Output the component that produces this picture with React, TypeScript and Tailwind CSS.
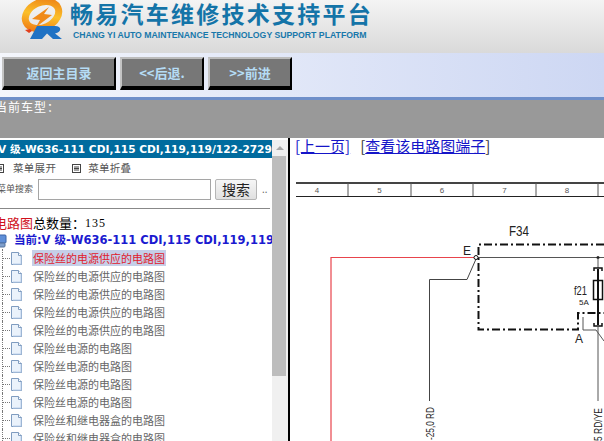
const cjk = "font-['Noto_Sans_CJK_SC','Noto_Sans',sans-serif]"

const treeItems = [
  "保险丝的电源供应的电路图",
  "保险丝的电源供应的电路图",
  "保险丝的电源供应的电路图",
  "保险丝的电源供应的电路图",
  "保险丝的电源供应的电路图",
  "保险丝电源的电路图",
  "保险丝电源的电路图",
  "保险丝电源的电路图",
  "保险丝电源的电路图",
  "保险丝和继电器盒的电路图",
  "保险丝和继电器盒的电路图",
]

function Logo() {
  return (
    <svg width="46" height="42" viewBox="0 0 46 42" className="shrink-0">
      <defs>
        <linearGradient id="swirl" x1="0" y1="1" x2="1" y2="0">
          <stop offset="0" stopColor="#ee6f10" />
          <stop offset="0.5" stopColor="#fbc02a" />
          <stop offset="1" stopColor="#ec7d14" />
        </linearGradient>
      </defs>
      <ellipse cx="23" cy="15" rx="17.5" ry="12.5" transform="rotate(-25 23 15)" fill="none" stroke="url(#swirl)" strokeWidth="7" />
      <path d="M30 7L13 19L21 20L17 27L33 15L25 14Z" fill="#f08a18" />
      <path d="M6 30L11 29L13 31L10 33Z" fill="#e2401c" />
      <path d="M11 39L18 26H36C43 26 43 32 36 33.5L43 39H34L28 33.5L23 39Z" fill="#1f72c4" />
    </svg>
  )
}

function NavButton({ label, width }: { label: string; width: string }) {
  return (
    <button
      className={`${width} h-[33px] bg-[#777777] border-t-[2px] border-l-[2px] border-r-[2px] border-b-[4px] border-t-[#bcbcbc] border-l-[#c4c4c4] border-r-black border-b-black text-[#b5dcf5] text-[13px] font-bold ${cjk}`}
    >
      {label}
    </button>
  )
}

function DocIcon() {
  return (
    <svg width="13" height="15" viewBox="0 0 13 15" className="shrink-0">
      <path d="M1.5 1.5H8.5L11.5 4.5V13.5H1.5Z" fill="#eaf2fb" stroke="#7f9cc0" />
      <path d="M8.5 1.5V4.5H11.5" fill="#ffffff" stroke="#7f9cc0" />
      <path d="M3 13H11V5" fill="none" stroke="#bcd0ea" />
    </svg>
  )
}

function MenuIcon() {
  return (
    <svg width="9" height="9" viewBox="0 0 9 9" className="shrink-0">
      <rect x="0.5" y="0.5" width="8" height="8" fill="#fff" stroke="#444" />
      <path d="M2 3H7M2 4.5H7M2 6H7" stroke="#444" />
    </svg>
  )
}

function TreeRow({ label, active }: { label: string; active?: boolean }) {
  return (
    <div className="flex items-center h-[18px] shrink-0">
      <div className="w-[3px] h-full border-r border-dotted border-[#777]" />
      <div className="w-[7px] border-t border-dotted border-[#777]" />
      <DocIcon />
      <span
        className={`ml-[9px] text-[11px] leading-[16px] px-[1px] whitespace-nowrap ${cjk} ${
          active ? "bg-[#c5cfe8] text-[#e0202c]" : "text-[#666666]"
        }`}
      >
        {label}
      </span>
    </div>
  )
}

function Diagram() {
  const cells = [52, 63, 62, 63, 62, 20]
  const labels = ["4", "5", "6", "7", "8", ""]
  let x = 0
  const ticks = cells.map((w, i) => {
    x += w
    return (
      <g key={i}>
        <line x1={x} y1="2" x2={x} y2="15" stroke="#555" />
        <text x={x - w / 2 + (i === 0 ? -5 : 0)} y="12" fontSize="8" fill="#555" textAnchor="middle" fontFamily="Liberation Sans">
          {labels[i]}
        </text>
      </g>
    )
  })

  return (
    <svg width="308" height="260" viewBox="0 0 308 260" className="ml-[6px] mt-[2px] block shrink-0">
      {/* ruler */}
      <rect x="0" y="1" width="308" height="2" fill="#444" />
      <line x1="0" y1="15.5" x2="308" y2="15.5" stroke="#222" />
      {ticks}

      <g fontFamily="Liberation Sans" fill="#222">
        <text x="213" y="55" fontSize="14" textLength="20" lengthAdjust="spacingAndGlyphs">F34</text>
        <text x="167" y="74" fontSize="12">E</text>
        <text x="278" y="114" fontSize="12" textLength="13" lengthAdjust="spacingAndGlyphs">f21</text>
        <text x="283" y="124" fontSize="8">5A</text>
        <text x="279" y="162" fontSize="12">A</text>
      </g>

      {/* fuse box outline */}
      <path d="M308 63.5H182.5V148.5H282V132H308" fill="none" stroke="#111" strokeWidth="2" strokeDasharray="8 3 2 3" />

      {/* wires */}
      <path d="M35 260V76.5H178" fill="none" stroke="#e8444c" strokeWidth="1.2" />
      <path d="M182 76.5H308" fill="none" stroke="#555" strokeWidth="1.2" />
      <path d="M180 78L171 98.5H133.5V220" fill="none" stroke="#444" strokeWidth="1" />
      <circle cx="180" cy="76.5" r="2" fill="#fff" stroke="#111" />

      {/* fuse f21 */}
      <circle cx="302" cy="76.5" r="1.5" fill="#222" />
      <path d="M302 77V87" stroke="#555" />
      <path d="M298 90V87H306V90" fill="none" stroke="#111" strokeWidth="1.5" />
      <path d="M302 88V144" stroke="#111" strokeWidth="2" />
      <rect x="297.5" y="99.5" width="9" height="19" fill="none" stroke="#111" strokeWidth="1.5" />
      <path d="M298 142V145H306V142" fill="none" stroke="#111" strokeWidth="1.5" />
      <path d="M302 145V220" stroke="#555" />
      <path d="M287 136V149H300L308 160" fill="none" stroke="#555" />

      <g fontFamily="Liberation Sans" fontSize="11" fill="#222">
        <text transform="translate(138 259) rotate(-90)" textLength="33" lengthAdjust="spacingAndGlyphs">-25,0 RD</text>
        <text transform="translate(306 260) rotate(-90)" textLength="33" lengthAdjust="spacingAndGlyphs">5 RD/YE</text>
      </g>
    </svg>
  )
}

export default function App() {
  return (
    <div className="w-[604px] h-[441px] overflow-hidden flex flex-col bg-white">
      {/* Logo header */}
      <div className="h-[53px] shrink-0 flex items-start pl-[19px] bg-gradient-to-b from-[#f4f4f4] to-[#d9d9d9]">
        <Logo />
        <div className="ml-[5px] flex flex-col">
          <div className={`text-[23px] leading-[27px] tracking-[2.25px] font-bold text-[#1474a8] whitespace-nowrap ${cjk}`}>
            畅易汽车维修技术支持平台
          </div>
          <div className="ml-[3px] mt-[2px] text-[8.7px] leading-[12px] font-bold text-[#1878ab] whitespace-nowrap font-['Liberation_Sans',sans-serif]">
            CHANG YI AUTO MAINTENANCE TECHNOLOGY SUPPORT PLATFORM
          </div>
        </div>
      </div>

      {/* Nav buttons */}
      <div className="h-[47px] shrink-0 flex gap-[4px] pl-[2px] pt-[4px] border-b-[3px] border-[#6f8fc9] bg-gradient-to-r from-[#f4f6fc] to-[#cdd7f3]">
        <NavButton label="返回主目录" width="w-[114px]" />
        <NavButton label="<<后退." width="w-[84px]" />
        <NavButton label=">>前进" width="w-[84px]" />
      </div>

      {/* Current model */}
      <div className={`h-[38px] shrink-0 bg-[#999999] text-white text-[12px] leading-[14px] tracking-[1px] -indent-[5px] ${cjk}`}>
        当前车型：
      </div>

      <div className="flex-1 min-h-0 flex">
        {/* Left menu */}
        <div className="w-[272px] shrink-0 overflow-hidden pt-[2px] flex flex-col">
          <div className="h-[18px] shrink-0 bg-[#006b9e] text-white text-[10.6px] leading-[18px] font-bold whitespace-nowrap overflow-hidden -indent-[2px] font-['DejaVu_Sans','Noto_Sans_CJK_SC',sans-serif]">
            V 级-W636-111 CDI,115 CDI,119,119/122-2729
          </div>
          <div className={`h-[20px] shrink-0 flex items-center text-[10.5px] tracking-[0.3px] text-[#555] whitespace-nowrap ${cjk} -ml-[5px]`}>
            <MenuIcon />
            <span className="ml-[9px]">菜单展开</span>
            <span className="ml-[16px]"><MenuIcon /></span>
            <span className="ml-[7px]">菜单折叠</span>
          </div>
          <div className="h-[22px] shrink-0 flex items-center -ml-[3px]">
            <span className={`w-[36px] text-[9px] text-[#555] whitespace-nowrap ${cjk}`}>菜单搜索</span>
            <input className="ml-[5px] w-[173px] h-[21px] bg-white border border-[#a5a5a5]" />
            <button className={`ml-[4px] w-[42px] h-[21px] border border-[#b5b5b5] rounded-[2px] bg-gradient-to-b from-[#f6f6f6] to-[#e0e0e0] text-[14px] leading-[18px] text-[#222] ${cjk}`}>
              搜索
            </button>
            <span className="ml-[5px] text-[10px] text-[#666]">..</span>
          </div>
          <div className="h-0 mt-[8px] w-[270px] shrink-0 border-t border-[#888]" />
          <div className={`mt-[6px] h-[16px] shrink-0 flex items-center text-[13px] whitespace-nowrap -ml-[6px] ${cjk}`}>
            <span className="text-[#d0101c]">电路图</span>
            <span className="text-black">总数量：</span>
            <span className="text-black text-[12px] font-['Liberation_Serif',serif] tracking-[1px]">135</span>
          </div>
          <div className="mt-[2px] h-[16px] shrink-0 flex items-center whitespace-nowrap">
            <svg width="14" height="15" viewBox="0 0 14 15" className="shrink-0 -ml-[6px]">
              <rect x="3" y="1" width="9" height="8" rx="1" fill="#5f8fd8" stroke="#3a64a8" />
              <rect x="1" y="9" width="10" height="4" rx="1" fill="#7f9fcc" stroke="#55729c" />
            </svg>
            <span className="ml-[6px] text-[11.5px] font-bold text-[#1a1ad0] font-['DejaVu_Sans','Noto_Sans_CJK_SC',sans-serif]">
              当前:V 级-W636-111 CDI,115 CDI,119,119
            </span>
          </div>
          <div className="flex flex-col">
            {treeItems.map((item, i) => (
              <TreeRow key={i} label={item} active={i === 0} />
            ))}
          </div>
        </div>

        {/* Scrollbar */}
        <div className="w-[16px] shrink-0 mt-[2px] bg-[#f0f0f0] flex flex-col">
          <div className="h-[16px] shrink-0 flex items-center justify-center">
            <div className="w-0 h-0 border-l-[4px] border-r-[4px] border-b-[4px] border-l-transparent border-r-transparent border-b-[#a8a8a8]" />
          </div>
          <div className="h-[220px] w-[14px] bg-[#bdbdbd]" />
        </div>

        {/* Divider */}
        <div className="w-[2px] shrink-0 bg-black" />

        {/* Diagram pane */}
        <div className="flex-1 min-w-0 overflow-hidden flex flex-col">
          <div className={`h-[41px] shrink-0 pl-[5px] text-[15px] leading-[16px] whitespace-nowrap text-[#333] ${cjk}`}>
            <a className="text-[#1515c8] underline">[上一页]</a>
            <span className="ml-[10px]">[</span>
            <a className="text-[#1515c8] underline">查看该电路图端子</a>
            <span>]</span>
          </div>
          <Diagram />
        </div>
      </div>
    </div>
  )
}
